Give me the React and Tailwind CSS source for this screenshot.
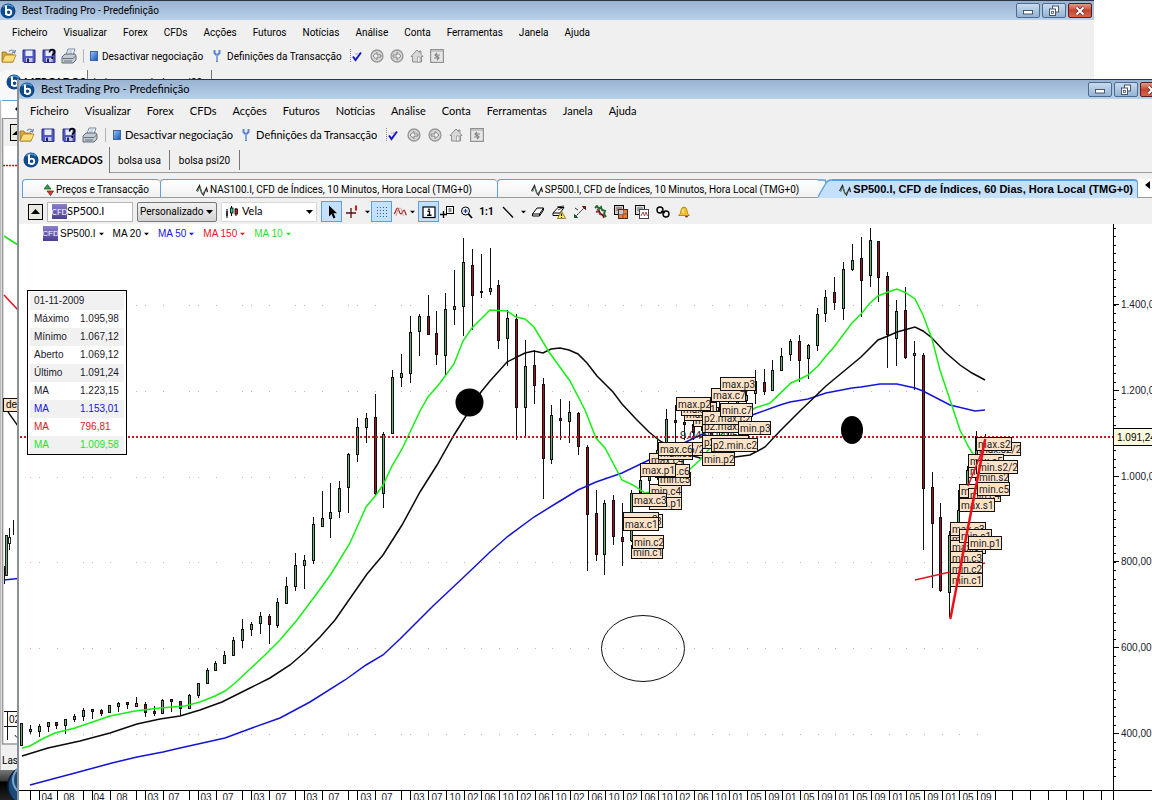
import React, { useState } from 'react';

const MENUS = ['Ficheiro', 'Visualizar', 'Forex', 'CFDs', 'Acções', 'Futuros', 'Notícias', 'Análise', 'Conta', 'Ferramentas', 'Janela', 'Ajuda'];

// [high, body top, body bottom, low, 1 = falling]
const CANDLES = [
  [723, 723, 745, 745], [725, 729, 731, 734], [724, 726, 731, 737], [722, 722, 726, 732], [722, 722, 725, 729, 1],
  [719, 719, 725, 734], [714, 716, 719, 722], [708, 710, 716, 721], [709, 709, 711, 719, 1], [709, 710, 713, 716, 1],
  [705, 705, 712, 713], [702, 703, 706, 712], [702, 702, 704, 709, 1], [697, 703, 706, 706], [702, 704, 712, 717, 1],
  [706, 711, 713, 716, 1], [699, 700, 713, 714], [699, 699, 701, 712, 1], [701, 701, 708, 716, 1], [694, 695, 708, 708],
  [683, 683, 695, 698], [668, 670, 683, 684], [661, 663, 670, 671], [651, 655, 663, 664], [637, 640, 655, 656],
  [619, 629, 640, 648], [622, 624, 629, 636], [612, 616, 623, 634], [614, 616, 624, 644, 1], [598, 602, 625, 628],
  [577, 586, 603, 604], [553, 565, 586, 591], [555, 560, 565, 589], [517, 524, 560, 564], [491, 518, 526, 526],
  [483, 512, 518, 538], [481, 488, 511, 518], [453, 454, 487, 513], [418, 427, 454, 462], [413, 418, 427, 443],
  [394, 417, 493, 495, 1], [432, 434, 493, 508], [370, 377, 433, 434], [354, 373, 377, 387], [316, 332, 373, 383],
  [314, 316, 331, 356], [295, 316, 334, 335, 1], [311, 333, 354, 365, 1], [293, 309, 355, 375], [270, 306, 309, 325],
  [238, 262, 306, 336], [249, 265, 295, 330, 1], [254, 291, 292, 298], [248, 288, 291, 295], [280, 285, 340, 349, 1],
  [310, 318, 338, 366], [314, 319, 407, 440, 1], [340, 366, 407, 436], [350, 365, 385, 404, 1], [378, 384, 458, 499, 1],
  [405, 415, 459, 464], [399, 418, 420, 440, 1], [401, 412, 421, 443], [412, 413, 446, 455, 1], [445, 447, 514, 571, 1],
  [490, 513, 554, 561, 1], [500, 503, 554, 575], [495, 500, 536, 545, 1], [503, 537, 541, 566, 1], [490, 493, 540, 542],
  [470, 480, 492, 495], [465, 476, 480, 500], [440, 450, 476, 480], [409, 419, 443, 460], [405, 420, 422, 445, 1],
  [412, 422, 424, 440, 1], [418, 424, 432, 440, 1], [400, 410, 430, 440], [410, 420, 440, 450, 1], [400, 410, 430, 440],
  [400, 410, 420, 440], [388, 395, 410, 420], [385, 395, 400, 420], [370, 381, 393, 404], [369, 382, 391, 395, 1],
  [360, 370, 390, 391], [348, 356, 370, 371], [339, 341, 354, 361], [335, 341, 360, 382, 1], [344, 345, 358, 379],
  [308, 314, 345, 351], [290, 297, 313, 322], [277, 292, 302, 310, 1], [262, 269, 308, 320], [244, 260, 269, 271],
  [237, 258, 280, 317, 1], [228, 240, 275, 287], [241, 241, 277, 302, 1], [272, 276, 334, 368, 1], [300, 311, 338, 366],
  [287, 310, 357, 359, 1], [341, 353, 355, 390], [353, 355, 488, 550, 1], [472, 487, 523, 588, 1], [503, 517, 590, 592, 1],
  [531, 535, 592, 617], [490, 510, 530, 540], [466, 470, 500, 510], [431, 436, 480, 490], [434, 437, 450, 460],
];

const MA10 = '22,748 30,746 42,739 55,733 75,728 110,716 135,711 160,708 185,706 200,702 215,696 225,691 235,683 250,669 265,655 280,640 297,620 318,592 331,574 350,543 366,507 376,495 383,485 392,466 402,449 420,411 428,397 440,383 454,364 463,341 472,328 490,310 507,311 516,317 525,319 534,327 549,352 570,381 585,410 596,438 605,448 622,480 633,485 645,493 660,490 680,478 700,460 720,436 735,420 755,408 770,403 791,383 800,379 808,375 818,366 826,356 834,347 852,323 861,314 870,303 878,296 888,292 897,289 906,293 915,299 923,315 932,339 940,370 952,406 960,430 968,446 973,454 985,465';
const MA20 = '22,756 48,748 80,741 110,733 137,724 160,719 180,716 200,710 222,702 250,688 270,678 290,665 305,652 320,637 335,620 367,574 383,555 402,525 420,492 437,465 454,435 466,416 481,392 490,381 507,362 525,353 534,351 543,353 551,349 560,348 569,350 578,354 587,363 597,376 613,392 622,404 636,419 649,432 660,441 680,452 700,458 720,459 735,457 750,455 765,447 780,431 800,411 826,386 861,357 878,340 888,336 897,332 915,327 923,331 932,338 945,352 960,365 972,373 985,380';
const MA50 = '30,785 75,773 112,763 137,757 163,752 180,748 225,738 252,728 280,718 310,702 345,680 366,665 383,655 400,639 433,606 467,574 490,552 507,537 534,517 560,501 578,490 596,482 622,473 649,460 690,440 707,432 755,414 780,405 790,402 808,399 826,393 852,388 861,387 880,384 897,384 915,388 923,391 950,405 975,411 985,410';

const GRID = [[305, '1.400,00'], [391, '1.200,00'], [477, '1.000,00'], [562, '800,00'], [648, '600,00'], [734, '400,00']];

const NOTES = [
  [631, 545, 32, 'min.c1'], [632, 535, 32, 'min.c2'], [627, 514, 36, 'max.c3'], [623, 512, 36, 'max.c2'], [623, 517, 36, 'max.c1'],
  [649, 496, 33, 'min.p1'], [649, 484, 33, 'min.c4'], [632, 493, 35, 'max.c3'], [649, 453, 35, 'max.c4'], [658, 472, 33, 'min.c5'],
  [655, 464, 35, 'max.c6'], [658, 446, 35, 'max.c5'], [640, 463, 36, 'max.p1'], [660, 442, 43, 'max.c6/2'], [658, 442, 35, 'max.c6'],
  [693, 413, 35, 'max.c5'], [684, 407, 35, 'max.c4'], [681, 402, 36, 'max.c1'], [676, 397, 35, 'max.p2'],
  [702, 419, 50, 'p2.max.c1'], [702, 411, 50, 'p2.max.c2'], [711, 388, 35, 'max.c7'], [720, 377, 36, 'max.p3'], [720, 403, 33, 'min.c7'],
  [738, 421, 33, 'min.p3'], [702, 435, 47, 'p2.min.c1'], [711, 438, 47, 'p2.min.c2'], [702, 452, 33, 'min.p2'],
  [977, 442, 44, 'max.s2/2'], [968, 464, 33, 'min.s1'], [968, 454, 36, 'max.c5'], [976, 437, 36, 'max.s2'],
  [977, 470, 32, 'min.s2'], [976, 460, 42, 'min.s2/2'], [959, 484, 36, 'max.c4'], [968, 488, 33, 'min.c4'], [977, 482, 33, 'min.c5'],
  [959, 498, 36, 'max.s1'], [950, 532, 36, 'max.c2'], [950, 522, 36, 'max.c3'], [950, 540, 36, 'max.c1'], [959, 529, 33, 'min.s1'],
  [968, 536, 34, 'min.p1'], [950, 551, 33, 'min.c3'], [950, 562, 33, 'min.c2'], [950, 573, 33, 'min.c1'],
];

const MONTHS = [
  [47, '04'], [69, '08'], [99, '04'], [122, '08'], [153, '03'], [174, '07'], [206, '03'], [228, '07'], [259, '03'], [281, '07'],
  [312, '03'], [334, '07'], [366, '03'], [387, '07'], [419, '03'], [437, '07'],
  ...['10', '02', '06', '10', '02', '06', '10', '02', '06', '10', '02', '06', '10', '02', '06', '10', '01', '05', '09', '01', '05', '09', '01', '05', '09', '01', '05', '09', '01', '05', '09']
    .map((m, i) => [455 + Math.round(i * 17.7), m]),
];

// early quarters are spaced unevenly, later ones every 17.7px
const TICKS = [];
for (let x = 30; x < 440; x += 53) TICKS.push(x, x + 9, x + 27);
for (let i = 0; i < 38; i++) TICKS.push(Math.round(446 + i * 17.7));
const DOTS = TICKS.filter((x) => x < 990);

const QUOTE = [
  ['Máximo', '1.095,98', 'text-[#1a1a2a]'],
  ['Mínimo', '1.067,12', 'text-[#1a1a2a]'],
  ['Aberto', '1.069,12', 'text-[#1a1a2a]'],
  ['Último', '1.091,24', 'text-[#1a1a2a]'],
  ['MA', '1.223,15', 'text-[#1a1a2a]'],
  ['MA', '1.153,01', 'text-[#1414e6]'],
  ['MA', '796,81', 'text-[#e8141e]'],
  ['MA', '1.009,58', 'text-[#1ee61e]'],
];

const Logo = ({ className = 'w-4 h-4' }) => (
  <svg viewBox="0 0 16 16" className={`shrink-0 ${className}`}>
    <circle cx="8" cy="8" r="7.5" fill="#0d4a8c" />
    <path d="M3 4a7 7 0 0 1 10 0" fill="none" stroke="#4f93cc" strokeWidth="1.5" />
    <path d="M6 2.5v9.5" stroke="#fff" strokeWidth="2" />
    <circle cx="8.6" cy="9.3" r="2.7" fill="none" stroke="#fff" strokeWidth="1.8" />
  </svg>
);

const Folder = () => (
  <svg viewBox="0 0 16 16" className="w-4 h-4">
    <path d="M1 14V4h4l1 2h6v8z" fill="#d9a93a" stroke="#96701c" strokeWidth=".8" />
    <path d="M1 14l3-7h11l-3 7z" fill="#ffdf7a" stroke="#a87c20" strokeWidth=".8" />
    <path d="M8 3.5c2-2 4-2 5 0m1.5-1.5L13.5 5 11 4" fill="none" stroke="#6880b0" strokeWidth="1.2" />
  </svg>
);

const Disk = ({ mark }) => (
  <svg viewBox="0 0 16 16" className="w-4 h-4">
    <path d="M2 2h12v12.5H3L2 13.5z" fill="#5258c4" stroke="#2b2f86" />
    <rect x="4.5" y="2.5" width="7" height="5.5" fill="#e8ecfa" />
    <rect x="5" y="10" width="6.5" height="4" fill="#c3c6e0" />
    <rect x="6" y="10.5" width="2" height="3.5" fill="#23265e" />
    {mark && <path d="M8.5 4.5c0-4 5.5-3.5 5 0 0 1.5-2.2 1.5-2.2 3.2M11.3 9v2" fill="none" stroke="#000" strokeWidth="1.7" />}
  </svg>
);

const Printer = () => (
  <svg viewBox="0 0 16 16" className="w-4 h-4">
    <path d="M5 7l2-6h7l-2 6z" fill="#fff" stroke="#6a7a94" strokeWidth=".9" />
    <path d="M7.5 3h4M7 5h4" stroke="#7c96c0" strokeWidth=".8" />
    <path d="M1 9l3-3h10l1 2v4l-3 3H1z" fill="#c4cad4" stroke="#525c6c" strokeWidth=".9" />
    <path d="M2 10.5h10l2.5-2.5M3 13h8" fill="none" stroke="#5b6574" strokeWidth=".9" />
  </svg>
);

const Fork = () => (
  <svg viewBox="0 0 8 14" className="w-2 h-3.5">
    <path d="M1.5 1v3L4 6.5 6.5 4V1M4 6v7" fill="none" stroke="#5d83cc" strokeWidth="2" />
    <path d="M4 6v6" stroke="#c5d8f8" strokeWidth=".8" />
  </svg>
);

const Check = () => (
  <svg viewBox="0 0 12 14" className="w-3 h-3.5">
    <path d="M.5 0v14" stroke="#888" strokeDasharray="1 1" />
    <path d="M3 7.5L5.5 11 11 3.5" fill="none" stroke="#1818c8" strokeWidth="2" />
    <path d="M5 5h4" stroke="#99a" strokeWidth=".8" />
  </svg>
);

const NavArrow = ({ right }) => (
  <svg viewBox="0 0 14 14" className="w-3.5 h-3.5">
    <circle cx="7" cy="7" r="6" fill="#d4d4d4" stroke="#989898" strokeWidth="1.3" />
    <path d={right ? 'M3 6h4V3.5L11 7l-4 3.5V8H3z' : 'M11 6H7V3.5L3 7l4 3.5V8h4z'} fill="#f4f4f4" stroke="#7e7e7e" strokeWidth=".9" />
  </svg>
);

const House = () => (
  <svg viewBox="0 0 14 14" className="w-3.5 h-3.5">
    <path d="M1 7.5L7 1l2.5 2.6V2H11v3.3l2 2.2h-1.5V13h-9V7.5z" fill="#d8d8d8" stroke="#8e8e8e" />
    <rect x="7.5" y="8" width="2.5" height="5" fill="#fff" stroke="#8e8e8e" strokeWidth=".7" />
  </svg>
);

const Refresh = () => (
  <svg viewBox="0 0 14 14" className="w-3.5 h-3.5">
    <rect x=".6" y=".6" width="12.8" height="12.8" fill="#e6e6e6" stroke="#929292" strokeWidth="1.2" />
    <path d="M1 2h12" stroke="#aaa" />
    <path d="M10 6H5.5M7 4L5 6l2 2M4 9h4.500M7 7l2 2-2 2" fill="none" stroke="#848484" strokeWidth="1.1" />
  </svg>
);

const Wave = () => (
  <svg viewBox="0 0 12 12" className="w-3 h-3 shrink-0">
    <path d="M.5 7L3.5 1.5 5.5 8.5 7.5 11 9 7l1.5-3 1 4" fill="none" stroke="#222" strokeWidth="1.2" />
    <path d="M1.5 8L4 3l2.5 8 2-4" fill="none" stroke="#587058" />
  </svg>
);

const UpDown = () => (
  <svg viewBox="0 0 10 12" className="w-2.5 h-3 shrink-0">
    <path d="M0 5l3.5-4.5L7 5z" fill="#2fa044" stroke="#125420" strokeWidth=".7" />
    <path d="M3 7h6.5L6.5 11.5z" fill="#d93a32" stroke="#681410" strokeWidth=".7" />
  </svg>
);

const Caret = ({ className = 'text-black' }) => (
  <svg viewBox="0 0 7 4" className={`w-[7px] h-1 shrink-0 ${className}`}>
    <path d="M0 0h7L3.5 4z" fill="currentColor" />
  </svg>
);

const CfdBadge = () => (
  <span className="flex items-center justify-center shrink-0 w-[15px] h-[15px] bg-gradient-to-b from-[#8d80cc] to-[#4b3f94] text-white text-[8px] leading-none">
    CFD
  </span>
);

const TitleBar = ({ front }) => (
  <div className={`flex items-center h-5 shrink-0 border-t border-[#2a3444] bg-gradient-to-b from-[#98b3d1] to-[#b9d0ea] text-black ${front ? 'text-[11px] font-[Lato,sans-serif]' : 'text-[10px]'}`}>
    <Logo />
    <span className="ml-1.5 grow">Best Trading Pro - Predefinição</span>
    <div className={`flex gap-0.5 shrink-0 ${front ? '-mr-3' : 'mr-0.5'}`}>
      <button aria-label="Minimizar" className="flex items-center justify-center w-6 h-[15px] rounded-[2px] border border-[#4d6c90] bg-gradient-to-b from-[#c9dbee] to-[#94b3d4]">
        <svg viewBox="0 0 12 10" className="w-3 h-2.5"><rect x="1.5" y="4.5" width="9" height="3.5" fill="#fff" stroke="#49566c" /></svg>
      </button>
      <button aria-label="Restaurar" className="flex items-center justify-center w-6 h-[15px] rounded-[2px] border border-[#4d6c90] bg-gradient-to-b from-[#c9dbee] to-[#94b3d4]">
        <svg viewBox="0 0 12 12" className="w-3 h-3">
          <rect x="4.5" y="1" width="6" height="6" fill="#fff" stroke="#49566c" />
          <rect x="1.5" y="4" width="6" height="6.5" fill="#fff" stroke="#49566c" />
          <rect x="3.5" y="6.5" width="2" height="2" fill="none" stroke="#49566c" strokeWidth=".8" />
        </svg>
      </button>
      <button aria-label="Fechar" className="flex items-center justify-center w-6 h-[15px] rounded-[2px] border border-[#5a1c1c] bg-gradient-to-b from-[#e09a8c] via-[#c8442e] to-[#d4664e]">
        <svg viewBox="0 0 12 10" className="w-3 h-2.5">
          <path d="M2.5 1.5l7 7m0-7l-7 7" stroke="#5c3030" strokeWidth="3.4" />
          <path d="M2.5 1.5l7 7m0-7l-7 7" stroke="#fff" strokeWidth="2" />
        </svg>
      </button>
    </div>
  </div>
);

const MenuBar = ({ front }) => (
  <nav className={`flex items-center h-6 shrink-0 gap-4 text-black ${front ? 'pl-[11px] text-[11px] font-[Lato,sans-serif]' : 'pl-3 text-[10px]'}`}>
    {MENUS.map((m) => <button key={m} className="shrink-0">{m}</button>)}
  </nav>
);

const MainToolbar = ({ front }) => (
  <div className={`flex items-center h-6 shrink-0 text-black ${front ? 'gap-[5px] text-[11px] font-[Lato,sans-serif]' : 'pl-px gap-1 text-[10px]'}`}>
    <button aria-label="Abrir"><Folder /></button>
    <button aria-label="Guardar"><Disk /></button>
    <button aria-label="Guardar como"><Disk mark /></button>
    <button aria-label="Imprimir"><Printer /></button>
    <span className="w-px h-3.5 mx-0.5 bg-[#b4b4b4]" />
    <button className="flex items-center gap-1 shrink-0">
      <span className="w-2 h-2.5 bg-gradient-to-br from-[#8fc0f8] to-[#1f55b4] border border-[#3a64ac]" />
      Desactivar negociação
    </button>
    <button className={`flex items-center shrink-0 ${front ? 'gap-1.5 ml-1' : 'gap-1.5 ml-1.5'}`}><Fork />Definições da Transacção</button>
    <button aria-label="Confirmar" className="ml-1"><Check /></button>
    <button aria-label="Anterior" className="ml-1"><NavArrow /></button>
    <button aria-label="Seguinte" className="ml-0.5"><NavArrow right /></button>
    <button aria-label="Início" className="ml-0.5"><House /></button>
    <button aria-label="Actualizar" className="ml-0.5"><Refresh /></button>
  </div>
);

const WorkspaceTabs = () => (
  <div className="flex h-[26px] shrink-0 text-[10px] text-black">
    <button className="flex items-center gap-0.5 pl-1 w-[91px] border-r border-[#777] text-[11px] font-[Lato,Roboto,sans-serif] font-bold shrink-0"><Logo />MERCADOS</button>
    <div className="flex items-center pt-px border-b border-[#999] grow">
      <button className="w-[60px] h-5 border-r border-[#777]">bolsa usa</button>
      <button className="w-[70px] h-5 border-r border-[#777]">bolsa psi20</button>
    </div>
  </div>
);

const ChartTabs = () => (
  <div className="flex items-end h-[25px] pl-[3px] shrink-0 text-[10px] text-black">
    <button className="flex items-center justify-center gap-0.5 pl-2.5 pt-0.5 h-[19px] flex-[127] min-w-0 rounded-t border-t border-l border-b border-[#5c9fdc] border-b-[#999] bg-gradient-to-b from-white to-[#f1f1f1] whitespace-nowrap">
      <UpDown />Preços e Transacção
    </button>
    <button className="flex items-center justify-center gap-0.5 pl-2.5 pt-0.5 h-[19px] flex-[326] min-w-0 rounded-t border-t border-l border-b border-[#5c9fdc] border-b-[#999] bg-gradient-to-b from-white to-[#f1f1f1] whitespace-nowrap">
      <Wave />NAS100.I, CFD de Índices, 10 Minutos, Hora Local (TMG+0)
    </button>
    <button className="flex items-center justify-center gap-0.5 pl-2.5 pt-0.5 h-[19px] flex-[314] min-w-0 rounded-tl border-t border-l border-b border-[#5c9fdc] border-b-[#999] bg-gradient-to-b from-white to-[#f1f1f1] whitespace-nowrap">
      <Wave />SP500.I, CFD de Índices, 10 Minutos, Hora Local (TMG+0)
    </button>
    <button className="relative flex items-center justify-end gap-0.5 pr-1 h-[19px] flex-[311] min-w-0 rounded-tr border-t-2 border-r border-[#5c9fdc] bg-[#c5e0fb] text-[11px] font-['Liberation_Sans',Arial,sans-serif] font-bold whitespace-nowrap">
      <svg viewBox="0 0 14 19" className="absolute -top-0.5 -left-1 w-3.5 h-[19px]">
        <path d="M0 0h14v19H0z" fill="#f6f6f6" />
        <path d="M14 1H12Q10 1 8 4L1 16Q0 18.5-1 19H14z" fill="#c5e0fb" />
        <path d="M0 1H7L8 4M14 1H13Q10 1 8 4L1 16Q0 18.5-2 18.5" fill="none" stroke="#5c9fdc" strokeWidth="1.4" />
      </svg>
      <Wave />SP500.I, CFD de Índices, 60 Dias, Hora Local (TMG+0)
    </button>
    <button aria-label="Separadores anteriores" className="flex items-start justify-end w-3.5 h-[19px] shrink-0 pt-0.5 pr-0.5 border-b border-[#999] bg-white">
      <svg viewBox="0 0 5 8" className="w-[5px] h-2"><path d="M5 0v8L0 4z" /></svg>
    </button>
  </div>
);

const Tool = ({ label, active, children, className = 'w-[21px]' }) => (
  <button aria-label={label} className={`flex items-center justify-center h-[21px] shrink-0 ${active ? 'bg-[#c6e0fa] border border-[#5c9fdc]' : ''} ${className}`}>
    {children}
  </button>
);

const Glyph = ({ children }) => (
  <svg viewBox="0 0 14 14" className="w-3.5 h-3.5 shrink-0" fill="none" stroke="#000">{children}</svg>
);

const ChartToolbar = () => {
  const [symbol, setSymbol] = useState('SP500.I');
  return (
    <div className="flex items-center h-[26px] shrink-0 pl-[9px] pt-px text-[11px] text-black font-[Lato,Roboto,sans-serif]">
      <button aria-label="Recolher" className="flex items-center justify-center w-[15px] h-4 border border-black bg-[#e8e8dc]">
        <svg viewBox="0 0 9 5" className="w-[9px] h-[5px]"><path d="M0 5h9L4.5 0z" /></svg>
      </button>
      <label className="flex items-center w-[86px] h-5 pl-1 ml-1 border border-[#b8b8b8] bg-white">
        <CfdBadge />
        <input aria-label="Símbolo" value={symbol} onChange={(e) => setSymbol(e.target.value)} className="w-full min-w-0 outline-none" />
      </label>
      <div className="relative flex items-center ml-1">
        <select aria-label="Período" className="w-20 h-5 pl-0.5 rounded-[2px] border border-[#777] bg-gradient-to-b from-[#f2f2f2] to-[#d4d4d4] appearance-none text-[10px] font-[Roboto,sans-serif]">
          <option>Personalizado</option>
        </select>
        <span className="absolute right-1 pointer-events-none"><Caret /></span>
      </div>
      <div className="relative flex items-center ml-1">
        <span className="absolute left-1 pointer-events-none">
          <Glyph>
            <path d="M2 4v9M6.5 1v10M11 3v8" />
            <rect x="1" y="6" width="2" height="5" fill="#333" stroke="none" />
            <rect x="5.5" y="3" width="2.5" height="5" fill="#3c9" stroke="#000" strokeWidth=".8" />
            <rect x="10" y="4" width="2.5" height="5" fill="#c22" stroke="#000" strokeWidth=".8" />
          </Glyph>
        </span>
        <select aria-label="Tipo de gráfico" className="w-24 h-5 pl-5 border border-[#d8d8d8] bg-white appearance-none">
          <option>Vela</option>
        </select>
        <span className="absolute right-1 pointer-events-none"><Caret /></span>
      </div>
      <Tool label="Cursor" active className="w-[21px] ml-1">
        <Glyph><path d="M4 .5v11l2.5-2.5 2 4.5 2-1-2-4.2H12z" fill="#000" stroke="none" /></Glyph>
      </Tool>
      <Tool label="Mira">
        <Glyph><path d="M0 8h10M5 3v10" stroke="#501010" strokeWidth="1.3" /><path d="M10 .5v5" stroke="#d01818" strokeWidth="2" /></Glyph>
      </Tool>
      <Tool label="Opções da mira" className="w-2"><Caret className="text-black scale-75" /></Tool>
      <Tool label="Grelha" active>
        <Glyph><path d="M2 2.5h11M2 5.5h11M2 8.5h11M2 11.5h11" stroke="#38618c" strokeDasharray="1 2" /></Glyph>
      </Tool>
      <Tool label="Indicadores" className="w-4">
        <Glyph>
          <path d="M1 9c2-1 2-6 3.5-6S6 9 8 9s1.5-4 3-4 1 4 2.5 5" stroke="#a02828" strokeWidth="1.2" />
          <path d="M3 11c1-3 2-8 4-8s2 7 4 8" stroke="#c88" strokeWidth=".8" />
        </Glyph>
      </Tool>
      <Tool label="Opções de indicadores" className="w-2"><Caret className="text-black scale-75" /></Tool>
      <Tool label="Informação" active className="w-[21px] ml-0.5">
        <Glyph><rect x="1" y="2" width="12" height="10.5" fill="#fff" strokeWidth="1.2" /><path d="M5.5 6.2H7.5V10M5 10.3h4.5M6.2 4.2h1.5" strokeWidth="1.4" /></Glyph>
      </Tool>
      <Tool label="Nota" className="w-4">
        <Glyph><rect x="6.5" y="1.5" width="7" height="7" fill="#fff" /><path d="M8.5 4h3M8.5 6h3" strokeWidth=".9" /><path d="M0 9.5h7M3.5 6v7" strokeWidth="1.3" /></Glyph>
      </Tool>
      <Tool label="Ampliar">
        <Glyph><circle cx="6.5" cy="6" r="4" fill="#eef6ff" /><path d="M4.5 6h4M6.5 4v4" stroke="#16307c" strokeWidth="1.2" /><path d="M9.5 9l3.5 4" strokeWidth="1.8" /></Glyph>
      </Tool>
      <Tool label="Escala um para um"><span className="text-[10px] font-bold font-[Roboto,sans-serif]">1:1</span></Tool>
      <Tool label="Linha" className="w-[22px]"><Glyph><path d="M2 2l10 10.5" strokeWidth="1.3" /></Glyph></Tool>
      <Tool label="Opções da linha" className="w-2"><Caret className="text-black scale-75" /></Tool>
      <Tool label="Apagar"><Glyph><path d="M1.5 9L6 3h6.5L8.5 9zM1.5 9v2h7V9M8.5 11L12.5 5V3" fill="#fff" /></Glyph></Tool>
      <Tool label="Apagar tudo">
        <Glyph>
          <path d="M1 8l5-5.5h6L8 8zM1 8v2.5h6" fill="#fff" /><path d="M5 2l7-1M6 5l6-3" strokeWidth=".8" />
          <path d="M9.5 6l4 7.5h-8z" fill="#ffe95c" stroke="#7c6a10" strokeWidth=".8" /><path d="M9.5 8.5v2.5M9.5 12v1" strokeWidth="1.1" />
        </Glyph>
      </Tool>
      <Tool label="Tendência">
        <Glyph><path d="M2 12L11 3" strokeDasharray="2 1" /><path d="M9.500 1.500h3v3z" fill="#c82020" stroke="#601010" /><path d="M1.500 9.500v3h3z" fill="#278040" stroke="#105020" /><path d="M2 3l3 2" strokeWidth=".8" /></Glyph>
      </Tool>
      <Tool label="Sinais">
        <Glyph><path d="M1 3l2-2 2 3 2-2 1 3 3 1-1 3 2 3" stroke="#256c35" strokeWidth="2" /><path d="M2 7l3-1 1 3 3 1 1 3" stroke="#a82c38" strokeWidth="2" /><path d="M3 4l7 8" strokeWidth=".7" /></Glyph>
      </Tool>
      <Tool label="Copiar estudo" className="w-5">
        <Glyph><rect x=".5" y=".5" width="9" height="9" fill="#ccc" /><rect x="4.5" y="4.5" width="9" height="9" fill="#eb7d38" stroke="#502818" /><path d="M2 3h6M2 5h2M5 9h8M9 5v8" stroke="#7d5242" /><path d="M5 5h4v4H5z" fill="#bec8e0" stroke="none" /></Glyph>
      </Tool>
      <Tool label="Colar estudo">
        <Glyph><rect x=".5" y=".5" width="9" height="9" fill="#ddd" /><path d="M2 3h6M2 5h2" stroke="#666" /><rect x="4.5" y="4.5" width="9" height="9" fill="#fff" stroke="#444" /><path d="M6 11l2-4 1.5 4L11 7l1.5 4" stroke="#a05050" /></Glyph>
      </Tool>
      <Tool label="Ligar">
        <Glyph><circle cx="4" cy="5" r="3" strokeWidth="1.4" /><circle cx="10" cy="9" r="3" strokeWidth="1.4" /><path d="M5 6l4 2" strokeWidth="1.3" /></Glyph>
      </Tool>
      <Tool label="Alertas">
        <Glyph><path d="M1.5 10.5Q4 9 4 5.5 4.5 2 7 2t3 3.5q0 3.5 2.5 5z" fill="#f3c02c" stroke="#a87410" strokeWidth=".8" /><path d="M8 11a1.5 1.5 0 0 0 3 0z" fill="#803020" stroke="none" /><path d="M6 4v4" stroke="#fff0a0" strokeWidth="1.2" /></Glyph>
      </Tool>
    </div>
  );
};

const PriceChart = () => (
  <svg viewBox="19 224 1133 576" preserveAspectRatio="xMinYMin slice" className="block w-full h-full" fontFamily="'Liberation Sans', Arial, sans-serif">
    {GRID.map(([y]) => DOTS.map((x) => <rect key={`${x}-${y}`} x={x} y={y} width="1" height="1" fill="#b8b8b8" />))}

    {CANDLES.map(([hi, top, bot, lo, down], i) => {
      const x = Math.floor(21.5 + i * 8.84);
      return (
        <g key={i}>
          <rect x={x} y={hi} width="1" height={lo - hi} fill="#111" />
          <rect x={x - 0.5} y={top + 0.5} width="2" height={Math.max(1, bot - top)} fill={down ? '#a01420' : '#6fae72'} stroke="#111" />
        </g>
      );
    })}

    <polyline points={MA50} fill="none" stroke="#1414d8" strokeWidth="1.5" />
    <polyline points={MA20} fill="none" stroke="#0a0a0a" strokeWidth="1.5" />
    <polyline points={MA10} fill="none" stroke="#14f014" strokeWidth="1.5" />
    <path d="M20 437H1113" stroke="#d01420" strokeWidth="2" strokeDasharray="2 2" />
    <path d="M915 580L950 572 985 563" fill="none" stroke="#e01420" strokeWidth="1.3" />

    <circle cx="469.5" cy="402.5" r="14" />
    <ellipse cx="852" cy="430" rx="11" ry="14" />
    <ellipse cx="643" cy="648.5" rx="41.5" ry="33" fill="none" stroke="#111" />

    <text x="680" y="439" fontSize="11" fill="#222">9.04501495,4</text>
    {NOTES.map(([x, y, w, text], i) => (
      <g key={i}>
        <rect x={x + 0.5} y={y + 0.5} width={w - 1} height="13" fill="#fde3c8" stroke="#111" />
        <text x={x + 2} y={y + 11} fontSize="10" fontFamily="Roboto, sans-serif" fill="#221a22">{text}</text>
      </g>
    ))}
    <path d="M968 486L985 444" stroke="#e01420" strokeWidth="1.5" />
    <path d="M950.5 618L985 440" stroke="#ee1018" strokeWidth="2.5" strokeLinecap="round" />

    {/* price axis */}
    <path d="M1113.5 224V800M19 790.5H1152" stroke="#000" />
    {Array.from({ length: 65 }, (_, i) => Math.round(227.5 + i * 8.57)).map((y) => (
      <rect key={y} x="1114" y={y} width="2" height="1" />
    ))}
    {GRID.map(([y, label]) => (
      <g key={y}>
        <rect x="1114" y={y - 1} width="5" height="1" />
        <text x="1121" y={y + 3} fontSize="10" fill="#1a1a2a">{label}</text>
      </g>
    ))}
    <rect x="1113.5" y="428.5" width="50" height="17" fill="#fafadc" stroke="#000" />
    <text x="1117" y="441" fontSize="10">1.091,24</text>

    {/* time axis */}
    {TICKS.map((x) => <rect key={x} x={x} y="791" width="1" height="9" />)}
    {MONTHS.map(([x, m]) => <text key={x} x={x} y="801" fontSize="10" textAnchor="middle" fill="#1a1a2a">{m}</text>)}
  </svg>
);

const Legend = () => (
  <div className="absolute top-0.5 left-6 flex items-center gap-2 text-[10px] font-['Liberation_Sans',Arial,sans-serif]">
    <span className="flex items-center gap-0.5 text-black"><CfdBadge />SP500.I <Caret className="text-black scale-75" /></span>
    <span className="flex items-center gap-0.5 text-black">MA 20 <Caret className="text-black scale-75" /></span>
    <span className="flex items-center gap-0.5 text-[#1414e6]">MA 50 <Caret className="text-[#1414e6] scale-75" /></span>
    <span className="flex items-center gap-0.5 text-[#e8141e]">MA 150 <Caret className="text-[#e8141e] scale-75" /></span>
    <span className="flex items-center gap-0.5 text-[#1ee61e]">MA 10 <Caret className="text-[#1ee61e] scale-75" /></span>
  </div>
);

const QuotePanel = () => (
  <div className="absolute top-[66px] left-2 w-[100px] px-0.5 pt-px border border-black bg-white">
    <table className="w-full font-['Liberation_Sans',Arial,sans-serif] text-[10px] leading-none">
      <tbody>
        <tr className="h-[18px] bg-[#f1f1f1] text-[#1a1a2a]"><td colSpan="2" className="pl-1">01-11-2009</td></tr>
        {QUOTE.map(([name, value, color], i) => (
          <tr key={i} className={`h-[18px] ${color} ${i % 2 ? 'bg-[#f1f1f1]' : ''}`}>
            <td className="pl-1">{name}</td>
            <td className="w-11">{value}</td>
          </tr>
        ))}
      </tbody>
    </table>
  </div>
);

// what stays visible of the rear window along its left edge
const RearStrip = () => (
  <svg viewBox="0 68 60 732" preserveAspectRatio="xMinYMin meet" className="block w-[60px] h-full" fontFamily="'Liberation Sans', Arial, sans-serif" fontSize="10">
    <rect x="0" y="68" width="60" height="732" fill="#f0f0f0" />
    <rect x="0" y="72" width="60" height="28" fill="#f8f8f8" />
    <path d="M2 100.5H60" stroke="#5c9fdc" />
    <rect x="2" y="101" width="58" height="17" fill="#fff" />
    <path d="M2 118.5H60" stroke="#888" />
    <path d="M18 106v6l-3-3z" />
    <rect x="10.5" y="124.5" width="14" height="16" fill="#e8e8dc" stroke="#000" />
    <path d="M12 135h9l-4.5-4z" />
    <rect x="4" y="146" width="56" height="598" fill="#fff" />
    <path d="M.5 100V800" stroke="#bbb" /><path d="M2.5 118V744H60" fill="none" stroke="#999" strokeWidth="1.5" />
    <path d="M3 165.5H18" stroke="#d01420" strokeWidth="1.5" strokeDasharray="2 1" />
    <path d="M4 236L18 245" stroke="#14e614" strokeWidth="1.5" />
    <path d="M4 295L18 310" stroke="#e01420" strokeWidth="1.5" />
    <rect x="3.5" y="398.5" width="40" height="13" fill="#fde3c8" stroke="#111" /><text x="6" y="408">de</text>
    <path d="M8 412L18 426" stroke="#111" strokeWidth="1.3" />
    <path d="M4.5 566V584M9.5 528V550M13.5 520V535M17.5 545V556" stroke="#111" />
    <rect x="5.5" y="535.5" width="2" height="40" fill="#6fae72" stroke="#222" />
    <rect x="8.5" y="537.5" width="2" height="6" fill="#fff" stroke="#222" />
    <path d="M4 580L18 578.5" stroke="#1414d8" strokeWidth="1.5" />
    <path d="M4 711.5H18M4 726.5H18M7.5 711V740" stroke="#111" />
    <text x="9" y="723">02</text><path d="M15 735q1 3 3 2" fill="none" stroke="#333" />
    <text x="2" y="764" fontFamily="Roboto, sans-serif">Last</text>
    <defs>
      <linearGradient id="bar" x1="0" y1="0" x2="0" y2="1">
        <stop offset="0" stopColor="#777" /><stop offset=".35" stopColor="#3a3a3a" /><stop offset=".4" stopColor="#000" /><stop offset="1" stopColor="#222" />
      </linearGradient>
    </defs>
    <rect x="0" y="770" width="60" height="30" fill="url(#bar)" />
    <circle cx="28" cy="786" r="20" fill="#1b4a78" stroke="#0c2038" strokeWidth="1.5" />
    <circle cx="28" cy="780" r="15" fill="none" stroke="#78a8d0" strokeWidth="2" />
  </svg>
);

export default function App() {
  return (
    <div className="relative h-screen overflow-hidden bg-white font-[Roboto,'Open_Sans',sans-serif]">
      {/* rear window */}
      <section className="absolute top-0 bottom-0 left-0 right-[58px] flex flex-col bg-[#f0f0f0]">
        <TitleBar />
        <MenuBar />
        <MainToolbar />
        <div className="relative min-h-0 grow">
          <RearStrip />
          <div className="absolute top-0.5 left-1 flex h-6 text-[10px] text-black">
            <span className="flex items-center gap-0.5 w-[84px] pl-0.5 border-r border-[#777] bg-[#f8f8f8] text-[11px] font-[Lato,Roboto,sans-serif] font-bold"><Logo />MERCADOS</span>
            <span className="flex items-center justify-center w-[54px]">bolsa usa</span>
            <span className="flex items-center justify-center w-[70px] border-r border-[#777]">bolsa psi20</span>
          </div>
        </div>
      </section>

      {/* front window */}
      <section className="absolute top-[79px] bottom-0 left-[17px] right-0 flex flex-col border-l-2 border-[#8a8f98] bg-[#f0f0f0] overflow-hidden">
        <TitleBar front />
        <MenuBar front />
        <MainToolbar front />
        <WorkspaceTabs />
        <ChartTabs />
        <ChartToolbar />
        <div className="relative min-h-0 grow bg-white">
          <PriceChart />
          <Legend />
          <QuotePanel />
        </div>
      </section>
    </div>
  );
}
